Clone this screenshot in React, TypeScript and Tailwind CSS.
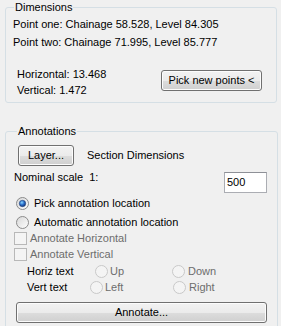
import React from 'react';

const btn =
  'rounded-[3px] border border-[#707070] bg-[linear-gradient(#f2f2f2_0%,#ebebeb_50%,#dddddd_50%,#cfcfcf_100%)] shadow-[inset_0_0_0_1px_#fcfcfc] text-black leading-[13px]';

function Radio({ checked, disabled }: { checked?: boolean; disabled?: boolean }) {
  return (
    <svg width="13" height="13" viewBox="0 0 13 13" className="shrink-0">
      <defs>
        <linearGradient id="rfill" x1="0" y1="0" x2="1" y2="1">
          <stop offset="0" stopColor="#d6d6d6" />
          <stop offset="1" stopColor="#ffffff" />
        </linearGradient>
        <radialGradient id="rdot" cx="0.4" cy="0.35" r="0.7">
          <stop offset="0" stopColor="#8ad8ff" />
          <stop offset="0.5" stopColor="#2a6fcc" />
          <stop offset="1" stopColor="#0f2d6e" />
        </radialGradient>
      </defs>
      {disabled ? (
        <circle cx="6.5" cy="6.5" r="6" fill="#f4f4f4" stroke="#c8c8c8" />
      ) : (
        <circle cx="6.5" cy="6.5" r="6" fill="url(#rfill)" stroke="#8a8a8a" />
      )}
      {checked && <circle cx="6.5" cy="6.5" r="3.2" fill="url(#rdot)" stroke="#26457a" strokeWidth="0.6" />}
    </svg>
  );
}

function Checkbox() {
  return <div className="w-[13px] h-[13px] shrink-0 border border-[#b8b8b8] bg-[#f4f4f4]" />;
}

export default function App() {
  return (
    <div
      className="w-[281px] h-[326px] overflow-hidden bg-[#f0f0f0] px-[5px] pt-[1px] text-[11px] leading-[13px] text-black"
      style={{ fontFamily: '"Liberation Sans", Arial, sans-serif' }}
    >
      {/* Dimensions */}
      <fieldset className="w-[272px] border border-[#d5dfe5] rounded-[3px] px-[7px] pb-[5px]">
        <legend className="ml-[1px] px-[1px] leading-[13px]">Dimensions</legend>
        <div className="pt-[4px]">Point one: Chainage 58.528, Level 84.305</div>
        <div className="pt-[5px]">Point two: Chainage 71.995, Level 85.777</div>
        <div className="mt-[19px] flex items-start">
          <div className="pl-[4px]">
            <div>Horizontal: 13.468</div>
            <div className="pt-[3px]">Vertical: 1.472</div>
          </div>
          <button className={`${btn} ml-auto mr-[7px] mt-[2px] w-[101px] h-[21px]`}>Pick new points &lt;</button>
        </div>
      </fieldset>

      {/* Annotations */}
      <fieldset className="mt-[22px] w-[272px] h-[220px] border border-[#d5dfe5] rounded-[3px] pl-[10px] pr-[10px]">
        <legend className="ml-[1px] px-[1px] leading-[13px]">Annotations</legend>
        <div className="mt-[7px] flex items-center h-[21px]">
          <button className={`${btn} ml-[2px] w-[56px] h-[21px]`}>Layer...</button>
          <span className="ml-[13px]">Section Dimensions</span>
        </div>
        <div className="mt-[5px] flex items-start h-[21px]">
          <span className="ml-[-2px]">Nominal scale&nbsp;&nbsp;1:</span>
          <div className="ml-auto mt-[1px] w-[43px] h-[21px] border border-[#abadb3] border-t-[#8e9097] bg-white pl-[2px] flex items-center">
            500
          </div>
        </div>
        <div className="mt-[3px] h-[16px] flex items-center">
          <Radio checked />
          <span className="ml-[5px]">Pick annotation location</span>
        </div>
        <div className="mt-[3px] h-[16px] flex items-center">
          <Radio />
          <span className="ml-[5px]">Automatic annotation location</span>
        </div>
        <div className="h-[16px] flex items-center ml-[-2px] text-[#6d6d6d]">
          <Checkbox />
          <span className="ml-[3px]">Annotate Horizontal</span>
        </div>
        <div className="h-[16px] flex items-center ml-[-2px] text-[#6d6d6d]">
          <Checkbox />
          <span className="ml-[3px]">Annotate Vertical</span>
        </div>
        <div className="mt-[1px] h-[16px] grid grid-cols-[79px_77px_auto] items-center">
          <span className="pl-[11px]">Horiz text</span>
          <div className="flex items-center text-[#6d6d6d]">
            <Radio disabled />
            <span className="ml-[2px]">Up</span>
          </div>
          <div className="flex items-center text-[#6d6d6d]">
            <Radio disabled />
            <span className="ml-[3px]">Down</span>
          </div>
        </div>
        <div className="h-[16px] grid grid-cols-[74px_83px_auto] items-center">
          <span className="pl-[11px]">Vert text</span>
          <div className="flex items-center text-[#6d6d6d]">
            <Radio disabled />
            <span className="ml-[2px]">Left</span>
          </div>
          <div className="flex items-center text-[#6d6d6d]">
            <Radio disabled />
            <span className="ml-[3px]">Right</span>
          </div>
        </div>
        <button className={`${btn} mt-[7px] w-[251px] h-[21px]`}>Annotate...</button>
      </fieldset>
    </div>
  );
}
